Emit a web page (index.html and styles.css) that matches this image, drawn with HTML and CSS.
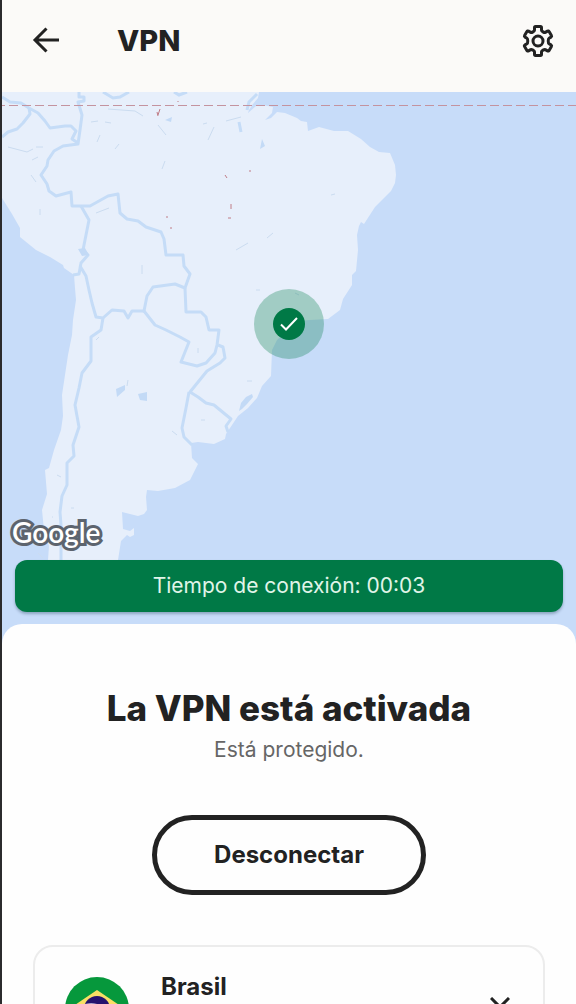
FILE: index.html
```
<!DOCTYPE html>
<html lang="es">
<head>
    <meta charset="UTF-8">
    <meta name="viewport" content="width=device-width, initial-scale=1.0">
    <title>VPN</title>
    <link rel="stylesheet" href="styles.css">
</head>
<body>
    <header class="top-bar">
        <button class="icon-button" type="button" aria-label="Atrás">
            <svg width="32" height="32" viewBox="0 0 32 32" fill="none" stroke="#222" stroke-width="3">
                <path d="M29 15H5M16.500 3.500L5 15l11.500 11.500"/>
            </svg>
        </button>
        <h1 class="top-title">VPN</h1>
        <button class="icon-button" type="button" aria-label="Ajustes">
            <svg width="36" height="36" viewBox="0 0 36 36" fill="none" stroke="#222" stroke-width="3" stroke-linejoin="round">
                <path d="M15.500 3.500h5c.8 0 1 .5 1 1.200v2.500c0 1 2.800 2.700 3.800 2.200l2.200-1.300c.7-.4 1.300-.2 1.600.4l2.300 4c.4.700.2 1.200-.4 1.600l-2 1.200c-1 .6-1 4.800 0 5.400l2 1.200c.6.400.8.900.4 1.600l-2.300 4c-.3.600-.9.800-1.600.4l-2.200-1.300c-1-.5-3.800 1.200-3.800 2.200v2.500c0 .7-.2 1.200-1 1.200h-5c-.8 0-1-.5-1-1.200v-2.500c0-1-2.800-2.700-3.800-2.200l-2.200 1.300c-.7.400-1.300.2-1.600-.4l-2.300-4c-.4-.7-.2-1.200.4-1.600l2-1.200c1-.6 1-4.800 0-5.400l-2-1.200c-.6-.4-.8-.9-.4-1.600l2.300-4c.3-.6.9-.8 1.600-.4l2.200 1.300c1 .5 3.800-1.200 3.800-2.200V4.700c0-.7.2-1.200 1-1.200z"/>
                <circle cx="18" cy="18" r="5"/>
            </svg>
        </button>
    </header>

    <main>
        <section class="map">
            <svg class="map-canvas" viewBox="2 92 574 552" preserveAspectRatio="xMidYMid slice" aria-hidden="true">
                <!-- land -->
                <path class="land" d="M2 92H259L258 98 253 104 249 110 248 113 256 106 263 105 273 107 272 113 265 120 271 118 277 112 285 113 297 118 301 121 307 122 308 131 319 127 334 131 348 131 361 139 370 147 379 152 390 153 395 165 396 175 395 183 391 191 375 207 364 224 361 222 359 226 357 235 358 250 356 271 352 275 352 285 343 299 340 310 328 319 310 320 298 321 285 333 277 340 272 350 271 376 262 386 257 398 248 408 238 416 230 428 226 434 225 439 214 444 198 442 191 443 192 458 198 464 190 480 175 488 158 491 147 490 146 497 147 510 144 514 138 516 122 512 123 529 130 531 134 528 134 535 130 537 127 535 121 541 118 560 48 560 49 546 44 530 42 510 47 494 45 470 49 468 54 450 61 430 63 416 62 395 65 375 68 355 72 335 73 320 76 300 75 288 74 275 64 268 63 265 50 257 36 250 20 237 20 228 12 214 2 198z"/>
                <!-- lagoon -->
                <path class="water" d="M239 411l2-8 5-6 6-3 1 3-6 7-5 5z"/>
                <!-- borders -->
                <g class="borders">
                    <path d="M2 97L10 102 21 103 29 108 38 113 45 121 50 128 65 126 71 126 76 131 72 139 78 143"/>
                    <path d="M29 108L30 114 23 123 17 129 8 132 2 137"/>
                    <path d="M79 92L79 97 84 97 84 101 78 102 82 115 80 130 78 144 63 146 54 151 48 160 47 166 41 175 47 184 49 191 56 196 71 192 72 206 90 206 108 196 118 194 120 213 127 219 138 221 146 227 161 232 164 239 166 255 183 255 184 266 190 274 185 288 175 284 153 287 147 296 144 311 132 311 128 318 124 311 112 310 103 318 96 317 92 303 89 290 86 276 80 266"/>
                    <path d="M81 206L89 220 85 240 83 250 88 255 81 263 79 274 73 275"/>
                    <path d="M185 288L186 312 201 312 206 317 209 330 219 330 217 345 215 353 206 363 197 366 181 362 189 342 180 337 166 330 155 325 144 311"/>
                    <path d="M218 345L223 347 225 358 220 363 207 371 190 392 198 397 206 403 214 405 231 419 226 426 228 432"/>
                    <path d="M189 392L186 408 182 428 184 437 192 445"/>
                    <path d="M103 318L101 330 91 337 91 361 82 373 79 388 75 405 79 427 73 445 74 456 67 463 67 485 62 496 60 512 61 525 61 560"/>
                </g>
                <path class="detail-thick" d="M103 92l10 6 7-1 9-5M174 92l5 3 8-3M257 94l-8 8-2 8M239 122l2 10"/>
                <path class="water" d="M78 249l7-1 4 7-7 1zM116 389l9-4v5l-8 7zM138 394l9-2v9l-7-1zM260 149l2-10 3 7zM165 120l7-3-1 5z"/>
                <!-- small lakes and rivers -->
                <path class="detail" d="M108 109l27 2 8 5M91 122l7-1M105 122l6 1M214 127l-6 13M158 125l8 10M165 161l-3 8M119 144l-4 5M100 135l-3 7M36 147h7M8 147l19 5 6-3M32 160l6-3M31 175l5 7M96 213l13-5M40 209v6M142 265v9M226 121l15-4M203 124l4-1M267 238l6-5M236 250l12-7M331 195l4-1M256 290h4M295 293l4 2M247 381h5M96 340l3-3M128 380l-1 6M198 348v5M201 420h4M172 431l5 4M57 475l4 2M71 508h3M52 517h1M38 553l5 5"/>
                <path class="specks" d="M157 112l1 4M160 109l-2 6M178 101v1M225 175l2 3M231 204v5M228 218h3M166 217h2M170 228h2M250 170v2"/>
                <line class="equator" x1="-4" y1="105.500" x2="576" y2="105.500"/>
            </svg>

            <div class="marker">
                <span class="marker-dot">
                    <svg width="20" height="16" viewBox="0 0 20 16" fill="none" stroke="#fff" stroke-width="2">
                        <path d="M2 8.500l5 5L18 2"/>
                    </svg>
                </span>
            </div>
            <span class="map-brand">Google</span>
            <p class="timer">Tiempo de conexión: 00:03</p>
        </section>

        <section class="sheet">
            <h2 class="status">La VPN está activada</h2>
            <p class="status-note">Está protegido.</p>
            <button class="disconnect" type="button">Desconectar</button>

            <button class="country" type="button">
                <svg class="flag" width="64" height="64" viewBox="0 0 64 64" aria-hidden="true">
                    <circle cx="32" cy="32" r="32" fill="#06983c"/>
                    <path d="M32 13L60 32 32 51 4 32z" fill="#f9df65"/>
                    <circle cx="32" cy="32" r="13" fill="#25126e"/>
                    <path d="M20 28c9-2 18 1 24 8" fill="none" stroke="#ddd9ed" stroke-width="2"/>
                </svg>
                <span class="country-name">Brasil</span>
                <svg class="chevron" width="20" height="12" viewBox="0 0 20 12" fill="none" stroke="#222" stroke-width="3" aria-hidden="true">
                    <path d="M1 1l9 9 9-9"/>
                </svg>
            </button>
        </section>
    </main>
</body>
</html>
```
FILE: styles.css
```
* {
    box-sizing: border-box;
}

body {
    margin: 0;
    height: 100vh;
    overflow: hidden;
    border-left: 2px solid #2b2b2d;
    background-color: #fefefe;
    color: #222;
    font-family: Inter, Arial, sans-serif;
}

h1, h2, p {
    margin: 0;
}

button {
    border: none;
    background: none;
    padding: 0;
    color: inherit;
    font-family: inherit;
    cursor: pointer;
}

/* Top bar */
.top-bar {
    display: flex;
    align-items: center;
    padding: 20px 20px 30px 28px;
    background-color: #fbfaf8;
}

.icon-button {
    display: flex;
}

.top-title {
    flex: 1;
    margin-left: 55px;
    font-size: 29px;
    line-height: 42px;
    font-weight: 800;
}

/* Map */
.map {
    position: relative;
    background-color: #c7dcf9;
}

.map-canvas {
    display: block;
    width: 100%;
    aspect-ratio: 574 / 552;
}

.land {
    fill: #e7effb;
}

.water {
    fill: #c3daf6;
}

.borders {
    fill: none;
    stroke: #c5dcf7;
    stroke-width: 3;
    stroke-linejoin: round;
}

.detail-thick {
    fill: none;
    stroke: #c5dcf7;
    stroke-width: 3;
}

.detail {
    fill: none;
    stroke: #cbdcf0;
    stroke-width: 1;
}

.specks {
    fill: none;
    stroke: #c07c86;
    stroke-width: 1;
}

.equator {
    stroke: #c4939f;
    stroke-width: 1;
    stroke-dasharray: 9 4;
}

.marker {
    position: absolute;
    left: 50%;
    top: 42%;
    display: flex;
    align-items: center;
    justify-content: center;
    width: 70px;
    height: 70px;
    border-radius: 50%;
    background-color: rgba(0, 121, 70, 0.3);
    transform: translate(-50%, -50%);
}

.marker-dot {
    display: flex;
    align-items: center;
    justify-content: center;
    width: 32px;
    height: 32px;
    border-radius: 50%;
    background-color: #007946;
}

.map-brand {
    position: absolute;
    left: 10px;
    bottom: 92px;
    color: #fff;
    font-family: Lato, sans-serif;
    font-size: 28px;
    line-height: 40px;
    font-weight: 600;
    -webkit-text-stroke: 6px #5d646e;
    paint-order: stroke fill;
}

.timer {
    position: absolute;
    left: 13px;
    right: 13px;
    bottom: 32px;
    border-radius: 12px;
    padding: 12px;
    background-color: #007946;
    box-shadow: 0 2px 3px rgba(0, 40, 60, 0.3);
    color: #e0f5e9;
    font-size: 21px;
    line-height: 28px;
    text-align: center;
}

/* Bottom sheet */
.sheet {
    position: relative;
    display: flex;
    flex-direction: column;
    align-items: center;
    margin-top: -20px;
    padding: 60px 31px 32px;
    border-radius: 20px 20px 0 0;
    background-color: #fefefe;
}

.status {
    font-size: 35px;
    line-height: 48px;
    font-weight: 800;
}

.status-note {
    margin-top: 4px;
    color: #666;
    font-size: 21px;
    line-height: 28px;
}

.disconnect {
    margin-top: 51px;
    padding: 20px 57px;
    border: 5px solid #222;
    border-radius: 40px;
    font-size: 24px;
    line-height: 30px;
    font-weight: 700;
}

.country {
    display: flex;
    align-items: flex-start;
    width: 100%;
    margin-top: 50px;
    padding: 30px;
    border: 2px solid #ececec;
    border-radius: 20px;
    text-align: left;
}

.country-name {
    flex: 1;
    margin-left: 32px;
    font-size: 24px;
    line-height: 20px;
    font-weight: 700;
}

.chevron {
    margin-top: 20px;
    margin-right: 3px;
}
```
